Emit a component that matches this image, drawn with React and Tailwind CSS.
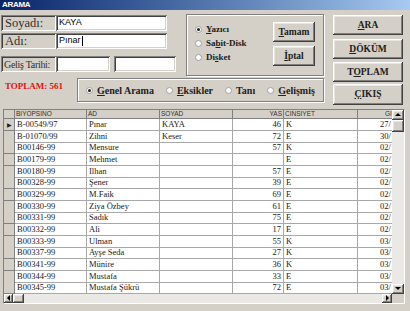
import React from 'react';

const raised =
  'bg-[#d4d0c8] shadow-[inset_-1px_-1px_#404040,inset_1px_1px_#ffffff,inset_-2px_-2px_#808080,inset_2px_2px_#e8e6e1]';
const sunken =
  'shadow-[inset_1px_1px_#808080,inset_-1px_-1px_#ffffff,inset_2px_2px_#404040,inset_-2px_-2px_#d4d0c8]';
const etched = 'border border-[#808080] shadow-[1px_1px_#ffffff,inset_1px_1px_#ffffff]';

const rows = [
  ['B-00549/97', 'Pınar', 'KAYA', '46', 'K', '27/'],
  ['B-01070/99', 'Zihni', 'Keser', '72', 'E', '30/'],
  ['B00146-99', 'Mensure', '', '57', 'K', '02/'],
  ['B00179-99', 'Mehmet', '', '', 'E', '02/'],
  ['B00180-99', 'Ilhan', '', '57', 'E', '02/'],
  ['B00328-99', 'Şener', '', '39', 'E', '02/'],
  ['B00329-99', 'M.Faik', '', '69', 'E', '02/'],
  ['B00330-99', 'Ziya Özbey', '', '61', 'E', '02/'],
  ['B00331-99', 'Sadık', '', '75', 'E', '02/'],
  ['B00332-99', 'Ali', '', '17', 'E', '02/'],
  ['B00333-99', 'Ulman', '', '55', 'K', '03/'],
  ['B00337-99', 'Ayşe Seda', '', '27', 'K', '03/'],
  ['B00341-99', 'Münire', '', '36', 'K', '03/'],
  ['B00344-99', 'Mustafa', '', '33', 'E', '03/'],
  ['B00345-99', 'Mustafa Şükrü', '', '72', 'E', '03/'],
];

function Radio({ checked, children }) {
  return (
    <div className="flex items-center gap-[4px]">
      <span className="w-[7px] h-[7px] rounded-full bg-white border border-[#a0a0a0] flex items-center justify-center">
        {checked && <span className="w-[3px] h-[3px] rounded-full bg-[#202020]" />}
      </span>
      <span>{children}</span>
    </div>
  );
}

function Btn({ children, className = '' }) {
  return (
    <div className={`${raised} flex items-center justify-center font-bold text-[9.5px] text-[#202020] ${className}`}>
      {children}
    </div>
  );
}

function Arrow({ dir }) {
  const d = {
    up: 'M1 5 L4 2 L7 5 Z',
    down: 'M1 2 L4 5 L7 2 Z',
    left: 'M5 1 L2 4 L5 7 Z',
    right: 'M3 1 L6 4 L3 7 Z',
  }[dir];
  return (
    <svg width="8" height="8" viewBox="0 0 8 8">
      <path d={d} fill="#000" />
    </svg>
  );
}

export default function App() {
  return (
    <div className="w-[410px] h-[311px] bg-[#d4d0c8] overflow-hidden font-['Liberation_Serif',serif] text-black">
      {/* title bar */}
      <div className="h-[10px] bg-gradient-to-r from-[#0a246a] to-[#a6caf0] flex items-center pl-[2px]">
        <span className="text-white font-bold text-[8px] leading-none font-['Liberation_Sans',sans-serif] tracking-[-0.3px]">ARAMA</span>
      </div>

      <div className="flex pt-[4px]">
        <div className="w-[330px]">
          {/* row 1: form + printer group */}
          <div className="flex">
            <div className="w-[180px] pl-[1px] pt-[1px]">
              <div className="flex h-[16px]">
                <div className={`${sunken} w-[55px] flex items-center pl-[4px] text-[12.5px] text-[#303030]`}>Soyadı:</div>
                <div className={`${sunken} bg-white w-[111px] flex items-center pl-[3px] text-[9px] font-['Liberation_Sans',sans-serif]`}>KAYA</div>
              </div>
              <div className="flex h-[16px] mt-[2px]">
                <div className={`${sunken} w-[55px] flex items-center pl-[4px] text-[12.5px] text-[#303030]`}>Adı:</div>
                <div className={`${sunken} bg-white w-[111px] flex items-center pl-[3px] text-[9px] font-['Liberation_Sans',sans-serif]`}>
                  Pınar<span className="w-px h-[10px] bg-black ml-px" />
                </div>
              </div>
              <div className="flex h-[16px] mt-[7px]">
                <div className={`${sunken} w-[55px] flex items-center pl-[3px] text-[10px] tracking-[-0.3px] text-[#303030] whitespace-nowrap overflow-hidden`}>Geliş Tarihi:</div>
                <div className={`${sunken} bg-white w-[54px]`} />
                <div className={`${sunken} bg-white w-[62px] ml-[4px]`} />
              </div>
            </div>
            <div className={`${etched} ml-[6px] w-[138px] h-[62px] flex pl-[8px] pt-[10px]`}>
              <div className="flex flex-col gap-[5px] text-[9px] font-bold leading-[9px] text-[#202020]">
                <Radio checked><u>Y</u>azıcı</Radio>
                <Radio>Sa<u>b</u>it-Disk</Radio>
                <Radio>Di<u>s</u>ket</Radio>
              </div>
              <div className="ml-auto mr-[8px] mt-[-3px] flex flex-col gap-[4px]">
                <Btn className="w-[42px] h-[20px]"><span><u>T</u>amam</span></Btn>
                <Btn className="w-[42px] h-[20px]"><span><u>İ</u>ptal</span></Btn>
              </div>
            </div>
          </div>

          {/* row 2: total + search type */}
          <div className="flex items-center mt-[2px]">
            <div className="w-[77px] pl-[5px] text-[9px] font-bold text-[#e01010] -mt-[6px]">TOPLAM: 561</div>
            <div className={`${etched} w-[247px] h-[24px] flex items-center pl-[8px] gap-[12px] text-[10px] font-bold text-[#202020]`}>
              <Radio checked><u>G</u>enel Arama</Radio>
              <Radio><u>E</u>ksikler</Radio>
              <Radio>Tanı</Radio>
              <Radio><u>G</u>elişmiş</Radio>
            </div>
          </div>
        </div>

        {/* right buttons */}
        <div className="ml-[3px] pt-[1px] flex flex-col">
          <Btn className="w-[70px] h-[20px]"><span><u>A</u>RA</span></Btn>
          <Btn className="w-[70px] h-[20px] mt-[4px]"><span><u>D</u>ÖKÜM</span></Btn>
          <Btn className="w-[70px] h-[20px] mt-[3px]"><span>T<u>O</u>PLAM</span></Btn>
          <Btn className="w-[70px] h-[21px] mt-[2px]"><span><u>Ç</u>IKIŞ</span></Btn>
        </div>
      </div>

      {/* grid */}
      <div className="mx-[3px] mt-[4px] w-[402px] h-[195px] flex flex-col border border-[#808080] border-r-white border-b-white">
        <div className="flex h-[184px]">
          <div className="w-[389px] overflow-hidden bg-white">
            <div className="grid grid-cols-[11px_72px_73px_73px_51px_74px_35px] w-[389px] h-[9px] bg-[#d4d0c8] font-['Liberation_Sans',sans-serif] text-[6.5px] leading-[8px] text-[#303030]">
              <div className="border-r border-b border-[#808080]" />
              <div className="border-r border-b border-[#808080] pl-[1px]">BIYOPSINO</div>
              <div className="border-r border-b border-[#808080] pl-[1px]">AD</div>
              <div className="border-r border-b border-[#808080] pl-[1px]">SOYAD</div>
              <div className="border-r border-b border-[#808080] pr-[1px] text-right">YAS</div>
              <div className="border-r border-b border-[#808080] pl-[1px]">CINSIYET</div>
              <div className="border-b border-[#808080] pl-[27px] whitespace-nowrap">GI</div>
            </div>
            {rows.map((r, i) => (
              <div key={i} className="grid grid-cols-[11px_72px_73px_73px_51px_74px_35px] w-[389px] h-[11.67px] text-[8.5px] leading-[11px] text-[#202020]">
                <div className="bg-[#d4d0c8] border-r border-b border-[#808080] flex items-center justify-center">
                  {i === 0 && <span className="text-[6px] leading-none">▶</span>}
                </div>
                <div className="border-r border-b border-[#a8a8a8] pl-[2px] whitespace-nowrap overflow-hidden">{r[0]}</div>
                <div className="border-r border-b border-[#a8a8a8] pl-[2px] whitespace-nowrap overflow-hidden">{r[1]}</div>
                <div className="border-r border-b border-[#a8a8a8] pl-[2px] whitespace-nowrap overflow-hidden">{r[2]}</div>
                <div className="border-r border-b border-[#a8a8a8] pr-[2px] text-right">{r[3]}</div>
                <div className="border-r border-b border-[#a8a8a8] pl-[2px]">{r[4]}</div>
                <div className="border-b border-[#a8a8a8] pl-[22px] whitespace-nowrap overflow-hidden">{r[5]}</div>
              </div>
            ))}
          </div>
          {/* vertical scrollbar */}
          <div className="w-[12px] flex flex-col bg-[#ebe9e5]">
            <div className={`${raised} h-[10px] flex items-center justify-center`}><Arrow dir="up" /></div>
            <div className={`${raised} h-[12px]`} />
            <div className="flex-1" />
            <div className={`${raised} h-[10px] flex items-center justify-center`}><Arrow dir="down" /></div>
          </div>
        </div>
        {/* horizontal scrollbar */}
        <div className="flex h-[10px]">
          <div className="w-[389px] flex bg-[#ebe9e5]">
            <div className={`${raised} w-[9px] flex items-center justify-center`}><Arrow dir="left" /></div>
            <div className={`${raised} w-[11px]`} />
            <div className="flex-1" />
            <div className={`${raised} w-[10px] flex items-center justify-center`}><Arrow dir="right" /></div>
          </div>
          <div className="w-[12px] bg-[#d4d0c8]" />
        </div>
      </div>
    </div>
  );
}
